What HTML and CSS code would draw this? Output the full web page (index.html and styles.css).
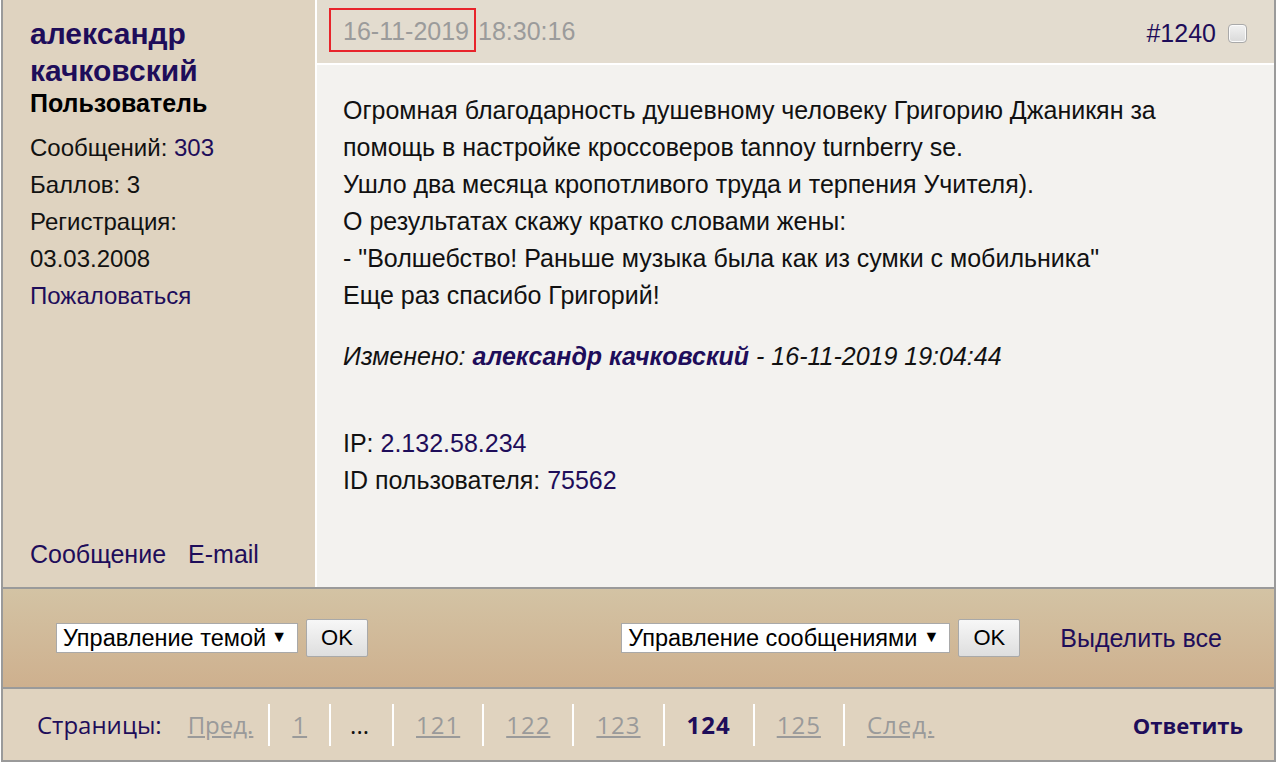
FILE: index.html
```html
<!DOCTYPE html>
<html lang="ru">
<head>
<meta charset="utf-8">
<title>Сообщение #1240</title>
<link rel="stylesheet" href="styles.css">
</head>
<body>
<div class="post">
  <div class="post-row">
    <aside class="author">
      <div class="author-top">
        <div class="author-name">александр качковский</div>
        <div class="author-role">Пользователь</div>
        <ul class="author-stats">
          <li>Сообщений: <a href="#">303</a></li>
          <li>Баллов: 3</li>
          <li>Регистрация:</li>
          <li>03.03.2008</li>
          <li><a href="#">Пожаловаться</a></li>
        </ul>
      </div>
      <div class="author-links">
        <a href="#">Сообщение</a>
        <a href="#">E-mail</a>
      </div>
    </aside>
    <section class="message">
      <header class="message-head">
        <div class="stamp"><span class="stamp-date">16-11-2019</span><span class="stamp-time">18:30:16</span></div>
        <div class="msg-num"><a href="#">#1240</a><span class="check"></span></div>
      </header>
      <div class="message-body">
        <p class="msg-text">Огромная благодарность душевному человеку Григорию Джаникян за<br>помощь в настройке кроссоверов tannoy turnberry se.<br>Ушло два месяца кропотливого труда и терпения Учителя).<br>О результатах скажу кратко словами жены:<br>- "Волшебство! Раньше музыка была как из сумки с мобильника"<br>Еще раз спасибо Григорий!</p>
        <p class="edited">Изменено: <a href="#">александр качковский</a> - 16-11-2019 19:04:44</p>
        <p class="meta">IP: <a href="#">2.132.58.234</a><br>ID пользователя: <a href="#">75562</a></p>
      </div>
    </section>
  </div>
  <div class="toolbar">
    <div class="tool-group">
      <span class="select select-topic">Управление темой<span class="arrow">▼</span></span>
      <button class="ok" type="button">OK</button>
    </div>
    <div class="tool-group">
      <span class="select select-msgs">Управление сообщениями<span class="arrow">▼</span></span>
      <button class="ok" type="button">OK</button>
      <a class="select-all" href="#">Выделить все</a>
    </div>
  </div>
  <nav class="pager">
    <div class="pages">
      <span class="pages-label">Страницы:</span>
      <a class="pg first" href="#">Пред.</a>
      <a class="pg" href="#">1</a>
      <span class="pg dots">...</span>
      <a class="pg" href="#">121</a>
      <a class="pg" href="#">122</a>
      <a class="pg" href="#">123</a>
      <span class="pg current">124</span>
      <a class="pg" href="#">125</a>
      <a class="pg" href="#">След.</a>
    </div>
    <a class="reply" href="#">Ответить</a>
  </nav>
</div>
</body>
</html>
```

FILE: styles.css
```css
* { box-sizing: border-box; }

html, body {
  margin: 0;
  padding: 0;
  background: #ffffff;
}

body {
  padding: 0 1px 0 1px;
  font-family: "Liberation Sans", Arial, sans-serif;
  font-size: 25px;
  color: #111111;
}

a {
  color: #1e0d5a;
  text-decoration: none;
}

.post {
  border-left: 2px solid #9a9a9a;
  border-right: 2px solid #9a9a9a;
  border-bottom: 2px solid #9a9a9a;
  width: 1275px;
}

.post-row {
  display: flex;
  min-height: 589px;
  border-bottom: 2px solid #9a9a9a;
}

/* ---------- author column ---------- */
.author {
  width: 312px;
  flex: none;
  background: #dfd3c0;
  padding: 15px 10px 14px 27px;
  display: flex;
  flex-direction: column;
  justify-content: space-between;
  margin-right: 2px;
}

.author-name {
  font-size: 30px;
  font-weight: bold;
  line-height: 37px;
  color: #1e0d5a;
}

.author-role {
  font-weight: bold;
  line-height: 28px;
  color: #000;
}

.author-stats {
  list-style: none;
  margin: 12px 0 0;
  padding: 0;
  font-size: 24px;
  line-height: 37px;
}

.author-links {
  line-height: 37px;
  display: flex;
  gap: 22px;
}

/* ---------- message ---------- */
.message {
  flex: 1;
  display: flex;
  flex-direction: column;
  background: #ffffff;
}

.message-head {
  height: 63px;
  background: #e3dccf;
  display: flex;
  align-items: center;
  justify-content: space-between;
  padding: 0 27px 0 12px;
  margin-bottom: 2px;
}

.stamp {
  color: #9b9b9b;
  display: flex;
  align-items: baseline;
  align-self: flex-start;
  margin-top: 8px;
}

.stamp-date {
  border: 2px solid #e8242b;
  padding: 4px 5px 1px 12px;
  line-height: 35px;
}

.stamp-time {
  padding-left: 2px;
}

.msg-num {
  display: flex;
  align-items: center;
  gap: 12px;
  padding-top: 4px;
}

.check {
  width: 19px;
  height: 19px;
  border: 1px solid #a9a9a9;
  border-radius: 4px;
  background: linear-gradient(#f2f2f2, #d9d9d9);
  box-shadow: inset 0 0 0 1px #fbfbfb;
}

.message-body {
  flex: 1;
  background: #f3f2ef;
  padding: 27px 26px 40px 26px;
  line-height: 37px;
}

.message-body p {
  margin: 0;
}

.edited {
  margin-top: 24px !important;
  font-style: italic;
}

.edited a {
  font-weight: bold;
}

.meta {
  margin-top: 50px !important;
}

/* ---------- toolbar ---------- */
.toolbar {
  height: 100px;
  background: linear-gradient(#d3c3a4, #ceb08e);
  display: flex;
  align-items: center;
  justify-content: space-between;
  padding: 0 52px 0 53px;
  border-bottom: 2px solid #9a9a9a;
}

.tool-group {
  display: flex;
  align-items: center;
  gap: 8px;
}

.select {
  position: relative;
  display: inline-block;
  height: 30px;
  line-height: 28px;
  background: #ffffff;
  border: 1px solid #a9a9a9;
  padding: 0 0 0 6px;
  color: #000;
  font-size: 23.5px;
  white-space: nowrap;
}

.select-topic { width: 242px; }
.select-msgs { width: 329px; margin-left: 2px; }

.arrow {
  position: absolute;
  right: 10px;
  top: -1px;
  font-size: 16px;
}

.ok {
  height: 38px;
  width: 62px;
  font-family: "Liberation Sans", Arial, sans-serif;
  font-size: 22px;
  color: #000;
  background: linear-gradient(#f7f7f7, #dedede);
  border: 1px solid #a9a9a9;
  border-radius: 2px;
  padding: 0;
}

.select-all {
  margin-left: 32px;
}

/* ---------- pager ---------- */
.pager {
  height: 71px;
  background: #e0d3bf;
  display: flex;
  align-items: center;
  justify-content: space-between;
  padding: 0 31px 0 34px;
  font-family: "Open Sans", "Noto Sans", sans-serif;
  font-size: 24px;
}

.pages {
  display: flex;
  align-items: center;
}

.pages-label {
  color: #1e0d5a;
  margin-right: 4px;
}

.pg {
  height: 42px;
  line-height: 42px;
  padding: 0 22px;
  border-left: 2px solid #ffffff;
  color: #9a9a9a;
  text-decoration: underline;
  letter-spacing: 1px;
}

.pg.first {
  border-left: none;
  letter-spacing: 0;
  padding-right: 15px;
}

.pg.dots {
  color: #111;
  text-decoration: none;
  letter-spacing: 0;
  padding: 0 23px 0 19px;
}

.pg.current {
  color: #1e0d5a;
  font-weight: bold;
  text-decoration: none;
}

.reply {
  font-weight: bold;
  font-size: 22px;
  color: #1e0d5a;
}
```
